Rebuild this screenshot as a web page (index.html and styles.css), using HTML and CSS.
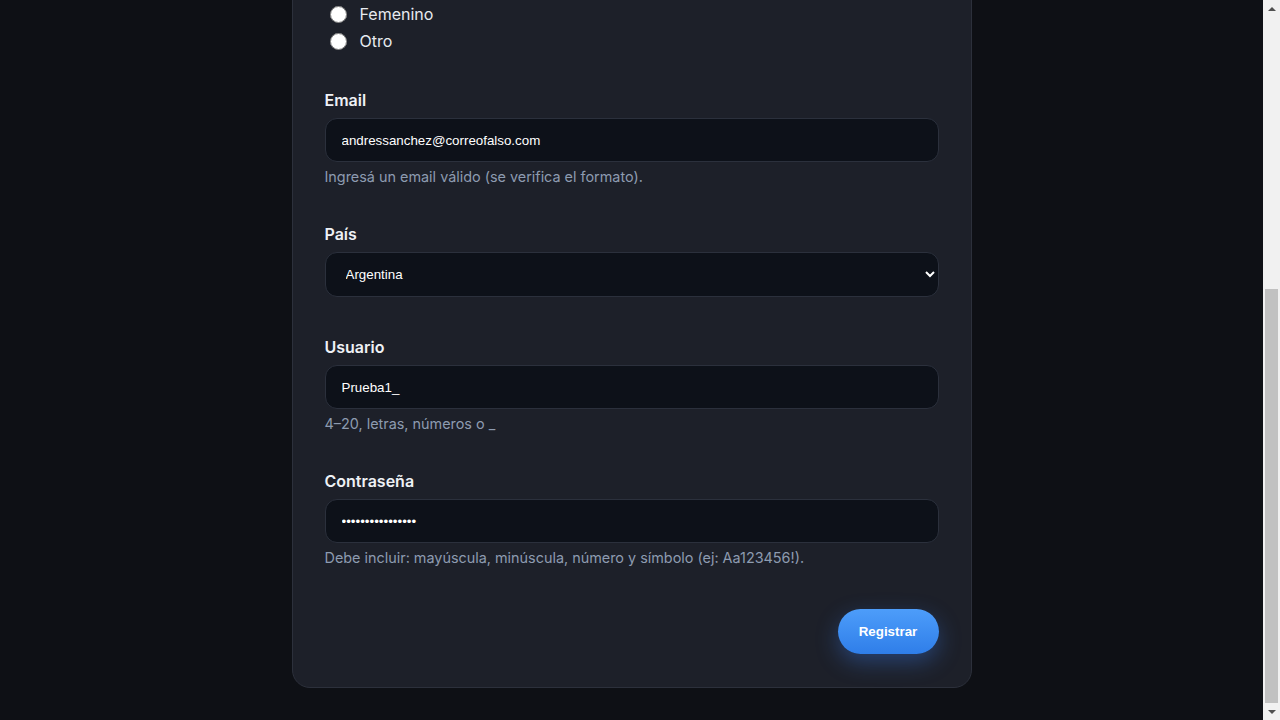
FILE: index.html
```html
<!DOCTYPE html>
<html lang="es">
<head>
<meta charset="utf-8">
<title>Registro</title>
<link rel="stylesheet" href="styles.css">
</head>
<body>
<div class="window">
  <main class="page">
    <form class="card" onsubmit="return false;">
      <div class="fields">
        <div class="field field-radio">
          <label class="radio-row"><input type="radio" name="genero" class="radio"><span>Femenino</span></label>
          <label class="radio-row"><input type="radio" name="genero" class="radio"><span>Otro</span></label>
        </div>
        <div class="field field-email">
          <label class="label" for="email">Email</label>
          <input class="control" id="email" type="email" value="andressanchez@correofalso.com">
          <small class="help">Ingresá un email válido (se verifica el formato).</small>
        </div>
        <div class="field field-pais">
          <label class="label" for="pais">País</label>
          <select class="control select" id="pais">
            <option>Argentina</option>
            <option>Chile</option>
            <option>Uruguay</option>
          </select>
        </div>
        <div class="field field-usuario">
          <label class="label" for="usuario">Usuario</label>
          <input class="control" id="usuario" type="text" value="Prueba1_">
          <small class="help">4–20, letras, números o _</small>
        </div>
        <div class="field">
          <label class="label" for="pass">Contraseña</label>
          <input class="control" id="pass" type="password" value="Aa123456!abcdefg">
          <small class="help">Debe incluir: mayúscula, minúscula, número y símbolo (ej: Aa123456!).</small>
        </div>
      </div>
      <div class="actions">
        <button class="btn" type="submit">Registrar</button>
      </div>
    </form>
  </main>
  <div class="scrollbar" aria-hidden="true">
    <div class="sb-arrow"><span class="tri tri-up"></span></div>
    <div class="sb-track"><div class="sb-thumb"></div></div>
    <div class="sb-arrow"><span class="tri tri-down"></span></div>
  </div>
</div>
</body>
</html>
```
FILE: styles.css
```css
html, body {
  margin: 0;
  padding: 0;
  background: #0e1015;
}
body {
  font-family: Inter, "Noto Sans", "Liberation Sans", sans-serif;
  color: #e7eaf0;
}
.window {
  display: flex;
  height: 720px;
  overflow: hidden;
}
.page {
  flex: 1;
  display: flex;
  justify-content: center;
  align-items: flex-start;
}
.card {
  box-sizing: border-box;
  width: 680px;
  margin-top: -32px;
  background: #1d2029;
  border: 1px solid #2c303b;
  border-radius: 18px;
  padding: 31px 32px 33px;
}
.fields {
  display: flex;
  flex-direction: column;
  gap: 38px;
}
.field {
  display: flex;
  flex-direction: column;
}
.field-radio {
  margin-bottom: -2px;
}
.field-email {
  margin-bottom: -1px;
}
.field-pais {
  margin-bottom: 2px;
}
.field-usuario {
  margin-bottom: -1px;
}
.label {
  font-size: 16px;
  font-weight: 600;
  line-height: 20px;
  color: #eef1f5;
  margin-bottom: 8px;
}
.control {
  box-sizing: border-box;
  height: 44px;
  width: 100%;
  background: #0d1119;
  border: 1px solid #2b303c;
  border-radius: 12px;
  padding: 0 16px;
  color: #ffffff;
  font-family: "Liberation Sans", Arial, sans-serif;
  font-size: 13.33px;
  outline: none;
}
.select {
  height: 45px;
  padding: 0 12px 0 16px;
}
.select option {
  background: #0d1119;
}
.help {
  margin-top: 5px;
  font-size: 14.4px;
  line-height: 20px;
  color: #8d9bb0;
}
.radio-row {
  display: flex;
  align-items: center;
  height: 27px;
  gap: 13px;
  font-size: 16px;
  color: #e7eaf0;
}
.radio {
  width: 17px;
  height: 17px;
  margin: 2px 0 0 5px;
}
.actions {
  display: flex;
  justify-content: flex-end;
  margin-top: 41px;
}
.btn {
  height: 45px;
  width: 101px;
  border: none;
  border-radius: 23px;
  background: linear-gradient(180deg, #4d9dfa 0%, #2f7ee9 100%);
  color: #ffffff;
  font-family: "Liberation Sans", Arial, sans-serif;
  font-weight: 700;
  font-size: 13.33px;
  box-shadow: 0 8px 22px rgba(59, 130, 246, 0.35);
  cursor: pointer;
}
.scrollbar {
  width: 17px;
  flex: 0 0 17px;
  display: flex;
  flex-direction: column;
  background: #f1f1f1;
}
.sb-arrow {
  height: 17px;
  display: flex;
  align-items: center;
  justify-content: center;
}
.tri {
  width: 0;
  height: 0;
  border-left: 4px solid transparent;
  border-right: 4px solid transparent;
}
.tri-up {
  border-bottom: 4px solid #505050;
}
.tri-down {
  border-top: 4px solid #505050;
}
.sb-track {
  flex: 1;
  display: flex;
  flex-direction: column;
  justify-content: flex-end;
  padding: 0 2px;
}
.sb-thumb {
  height: 414px;
  background: #c1c1c1;
}
```
